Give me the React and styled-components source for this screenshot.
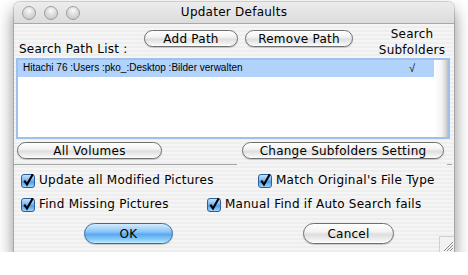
import React from "react"
import styled, { createGlobalStyle } from "styled-components"

const GlobalStyle = createGlobalStyle`
  html, body {
    margin: 0;
    padding: 0;
    background: #fff;
  }
  body {
    font-family: "DejaVu Sans", "Liberation Sans", sans-serif;
    font-size: 12px;
    letter-spacing: 0.25px;
    color: #000;
  }
`

const pinstripe = `repeating-linear-gradient(to bottom, #eeeeee 0px, #eeeeee 2px, #f5f5f5 2px, #f5f5f5 4px)`

const Window = styled.div`
  position: relative;
  margin: 2px 0 0 14px;
  width: 440px;
  height: 250px;
  display: flex;
  flex-direction: column;
  border-radius: 6px 6px 0 0;
  background: ${pinstripe};
  box-shadow: 0 9px 16px 1px rgba(0, 0, 0, 0.45), 0 0 0 1px rgba(0, 0, 0, 0.15);
  overflow: hidden;
`

const TitleBar = styled.div`
  height: 21px;
  display: grid;
  grid-template-columns: 1fr auto 1fr;
  align-items: center;
  background: linear-gradient(to bottom, #ececec, #dcdcdc);
  border-bottom: 1px solid #a8a8a8;
`

const Lights = styled.div`
  display: flex;
  gap: 8px;
  padding-left: 8px;
`

const Light = styled.span`
  width: 12px;
  height: 12px;
  border-radius: 50%;
  border: 1px solid #9c9c9c;
  background: radial-gradient(circle at 50% 30%, #fafafa 0%, #dcdcdc 45%, #c2c2c2 100%);
`

const Title = styled.div`
  font-size: 12px;
  line-height: 21px;
`

const Body = styled.div`
  flex: 1;
  display: flex;
  flex-direction: column;
`

const HeaderRow = styled.div`
  height: 34px;
  display: flex;
  align-items: flex-end;
  padding-left: 5px;
`

const PathLabel = styled.div`
  width: 125px;
  line-height: 15px;
  padding-bottom: 1px;
`

const ButtonGroup = styled.div`
  align-self: flex-start;
  margin-top: 6px;
  display: flex;
  gap: 7px;
`

const AquaButton = styled.button`
  box-sizing: border-box;
  width: ${p => p.w}px;
  height: ${p => (p.big ? 21 : 17)}px;
  padding: 0;
  border: 1px solid ${p => (p.primary ? "#3b6aa3" : "#6f6f6f")};
  border-radius: 11px;
  font-family: inherit;
  font-size: 12px;
  letter-spacing: 0.25px;
  line-height: 1;
  color: #000;
  background: ${p =>
    p.primary
      ? "linear-gradient(to bottom, #d4ebfd 0%, #8cc6f6 40%, #5aa9f0 55%, #8fd0fb 85%, #c9ecff 100%)"
      : "linear-gradient(to bottom, #ffffff 0%, #f3f3f3 40%, #dedede 55%, #f1f1f1 85%, #ffffff 100%)"};
  box-shadow: 0 1px 1px rgba(0, 0, 0, 0.18);
`

const SubfolderHeading = styled.div`
  margin-left: auto;
  margin-right: 2px;
  width: 80px;
  text-align: center;
  line-height: 16px;
`

const List = styled.div`
  box-sizing: border-box;
  height: 81px;
  margin: 0 4px 0 2px;
  border: 2px solid #9dc1ea;
  display: flex;
  background: #fff;
`

const Rows = styled.div`
  flex: 1;
`

const Row = styled.div`
  height: 17px;
  display: flex;
  align-items: center;
  background: ${p => (p.selected ? "#b0d2fb" : "transparent")};
  font-family: "Liberation Sans", "DejaVu Sans", sans-serif;
  font-size: 10px;
  letter-spacing: 0;
`

const RowText = styled.span`
  flex: 1;
  padding-left: 5px;
  padding-bottom: 2px;
`

const RowCheck = styled.span`
  width: 44px;
  text-align: center;
  font-size: 11px;
  padding-bottom: 2px;
`

const Scrollbar = styled.div`
  width: 14px;
  background: linear-gradient(to right, #ffffff 0%, #f4f4f4 55%, #d6d6d6 85%, #bcbcbc 100%);
`

const ButtonRow = styled.div`
  margin-top: 3px;
  display: flex;
  justify-content: space-between;
  padding: 0 10px 0 3px;
`

const RuleRow = styled.div`
  margin-top: 5px;
  display: flex;
  justify-content: space-between;
  padding-right: 2px;
`

const Rule = styled.div`
  width: ${p => p.w}px;
  height: 1px;
  background: #a4a4a4;
`

const Options = styled.div`
  margin-top: 8px;
  display: flex;
  flex-direction: column;
  gap: 10px;
  padding-left: 7px;
`

const CheckRow = styled.div`
  display: flex;
  height: 14px;
  align-items: center;
`

const CheckItem = styled.label`
  width: ${p => (p.w ? `${p.w}px` : "auto")};
  display: flex;
  align-items: center;
  gap: 3px;
  white-space: nowrap;
`

const Footer = styled.div`
  margin-top: 12px;
  display: flex;
  gap: 130px;
  padding-left: 70px;
`

const Grip = styled.div`
  position: absolute;
  right: 0;
  bottom: 0;
  width: 14px;
  height: 15px;
  border-top: 1px solid #d0d0d0;
  border-left: 1px solid #d0d0d0;
  background: #f2f2f2;
`

const CheckBox = () => (
  <svg width="15" height="15" viewBox="0 0 15 15">
    <defs>
      <linearGradient id="cbg" x1="0" y1="0" x2="0" y2="1">
        <stop offset="0" stopColor="#cfe6fb" />
        <stop offset="0.45" stopColor="#79b6ef" />
        <stop offset="0.55" stopColor="#4e9ceb" />
        <stop offset="1" stopColor="#a6dafc" />
      </linearGradient>
    </defs>
    <rect x="0.5" y="1.5" width="13" height="13" rx="2.5" fill="url(#cbg)" stroke="#2e5f9c" />
    <path d="M3.3 7.6 L6 11.6 L11.8 1.2" stroke="#000" strokeWidth="2.1" fill="none" strokeLinejoin="miter" />
  </svg>
)

const Option = ({ w, children }) => (
  <CheckItem w={w}>
    <CheckBox />
    {children}
  </CheckItem>
)

export default function App() {
  return (
    <>
      <GlobalStyle />
      <Window>
        <TitleBar>
          <Lights>
            <Light />
            <Light />
            <Light />
          </Lights>
          <Title>Updater Defaults</Title>
          <span />
        </TitleBar>
        <Body>
          <HeaderRow>
            <PathLabel>Search Path List :</PathLabel>
            <ButtonGroup>
              <AquaButton w={94}>Add Path</AquaButton>
              <AquaButton w={108}>Remove Path</AquaButton>
            </ButtonGroup>
            <SubfolderHeading>
              Search
              <br />
              Subfolders
            </SubfolderHeading>
          </HeaderRow>
          <List>
            <Rows>
              <Row selected>
                <RowText>Hitachi 76 :Users :pko_:Desktop :Bilder verwalten</RowText>
                <RowCheck>√</RowCheck>
              </Row>
            </Rows>
            <Scrollbar />
          </List>
          <ButtonRow>
            <AquaButton w={145}>All Volumes</AquaButton>
            <AquaButton w={202}>Change Subfolders Setting</AquaButton>
          </ButtonRow>
          <RuleRow>
            <Rule w={223} />
            <Rule w={5} />
          </RuleRow>
          <Options>
            <CheckRow>
              <Option w={237}>Update all Modified Pictures</Option>
              <Option>Match Original's File Type</Option>
            </CheckRow>
            <CheckRow>
              <Option w={186}>Find Missing Pictures</Option>
              <Option>Manual Find if Auto Search fails</Option>
            </CheckRow>
          </Options>
          <Footer>
            <AquaButton w={89} big primary>OK</AquaButton>
            <AquaButton w={91} big>Cancel</AquaButton>
          </Footer>
        </Body>
        <Grip>
          <svg width="14" height="15" viewBox="0 0 14 15">
            <path d="M4 14 L13 5 M7 14 L13 8 M10 14 L13 11" stroke="#8a8a8a" strokeWidth="1" />
          </svg>
        </Grip>
      </Window>
    </>
  )
}
